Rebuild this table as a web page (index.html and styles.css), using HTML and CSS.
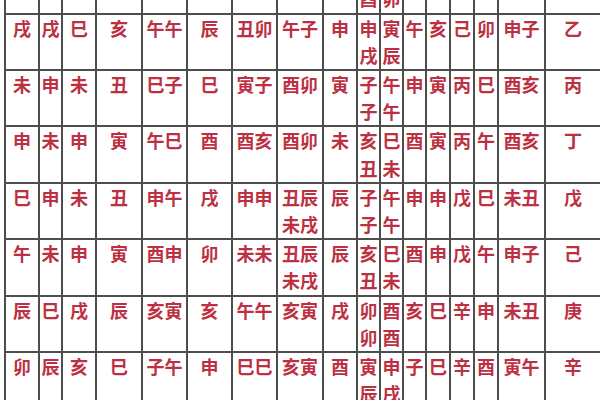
FILE: index.html
```html
<!DOCTYPE html>
<html lang="zh-CN">
<head>
<meta charset="utf-8">
<title>神煞表</title>
<link rel="stylesheet" href="styles.css">
</head>
<body>
<div class="sheet">
  <div class="c">亥</div><div class="c">酉</div><div class="c">午</div><div class="c">子</div><div class="c">寅寅</div><div class="c">卯</div><div class="c">子丑</div><div class="c">寅子</div><div class="c">巳</div><div class="c">午酉</div><div class="c">申卯</div><div class="c">未</div><div class="c">子</div><div class="c">庚</div><div class="c">寅</div><div class="c">寅午</div><div class="c">甲</div>

  <div class="c">戌</div><div class="c">戌</div><div class="c">巳</div><div class="c">亥</div><div class="c">午午</div><div class="c">辰</div><div class="c">丑卯</div><div class="c">午子</div><div class="c">申</div><div class="c">申戌</div><div class="c">寅辰</div><div class="c">午</div><div class="c">亥</div><div class="c">己</div><div class="c">卯</div><div class="c">申子</div><div class="c">乙</div>

  <div class="c">未</div><div class="c">申</div><div class="c">未</div><div class="c">丑</div><div class="c">巳子</div><div class="c">巳</div><div class="c">寅子</div><div class="c">酉卯</div><div class="c">寅</div><div class="c">子子</div><div class="c">午午</div><div class="c">申</div><div class="c">寅</div><div class="c">丙</div><div class="c">巳</div><div class="c">酉亥</div><div class="c">丙</div>

  <div class="c">申</div><div class="c">未</div><div class="c">申</div><div class="c">寅</div><div class="c">午巳</div><div class="c">酉</div><div class="c">酉亥</div><div class="c">酉卯</div><div class="c">未</div><div class="c">亥丑</div><div class="c">巳未</div><div class="c">酉</div><div class="c">寅</div><div class="c">丙</div><div class="c">午</div><div class="c">酉亥</div><div class="c">丁</div>

  <div class="c">巳</div><div class="c">申</div><div class="c">未</div><div class="c">丑</div><div class="c">申午</div><div class="c">戌</div><div class="c">申申</div><div class="c">丑辰未戌</div><div class="c">辰</div><div class="c">子子</div><div class="c">午午</div><div class="c">申</div><div class="c">申</div><div class="c">戊</div><div class="c">巳</div><div class="c">未丑</div><div class="c">戊</div>

  <div class="c">午</div><div class="c">未</div><div class="c">申</div><div class="c">寅</div><div class="c">酉申</div><div class="c">卯</div><div class="c">未未</div><div class="c">丑辰未戌</div><div class="c">辰</div><div class="c">亥丑</div><div class="c">巳未</div><div class="c">酉</div><div class="c">申</div><div class="c">戊</div><div class="c">午</div><div class="c">申子</div><div class="c">己</div>

  <div class="c">辰</div><div class="c">巳</div><div class="c">戌</div><div class="c">辰</div><div class="c">亥寅</div><div class="c">亥</div><div class="c">午午</div><div class="c">亥寅</div><div class="c">戌</div><div class="c">卯卯</div><div class="c">酉酉</div><div class="c">亥</div><div class="c">巳</div><div class="c">辛</div><div class="c">申</div><div class="c">未丑</div><div class="c">庚</div>

  <div class="c">卯</div><div class="c">辰</div><div class="c">亥</div><div class="c">巳</div><div class="c">子午</div><div class="c">申</div><div class="c">巳巳</div><div class="c">亥寅</div><div class="c">酉</div><div class="c">寅辰</div><div class="c">申戌</div><div class="c">子</div><div class="c">巳</div><div class="c">辛</div><div class="c">酉</div><div class="c">寅午</div><div class="c">辛</div>
</div>
</body>
</html>
```

FILE: styles.css
```css
html, body {
  margin: 0;
  padding: 0;
  background: #ffffff;
  overflow: hidden;
}

body {
  width: 600px;
  height: 400px;
  font-family: "Noto Sans CJK SC", "Noto Sans CJK JP", sans-serif;
}

.sheet {
  display: grid;
  grid-template-columns: 32px 21px 32px 44px 43px 43px 43px 44px 32px 21px 21px 21px 22px 22px 22px 45px 54px;
  grid-auto-rows: 54.43px;
  gap: 2px;
  padding: 2px;
  width: max-content;
  margin: -43.93px 0 0 4px;
  background: #4e4e4e;
}

.c {
  background: #ffffff;
  color: #bd3042;
  font-size: 18px;
  line-height: 27.2px;
  font-weight: 700;
  text-align: center;
  overflow: hidden;
}
```
